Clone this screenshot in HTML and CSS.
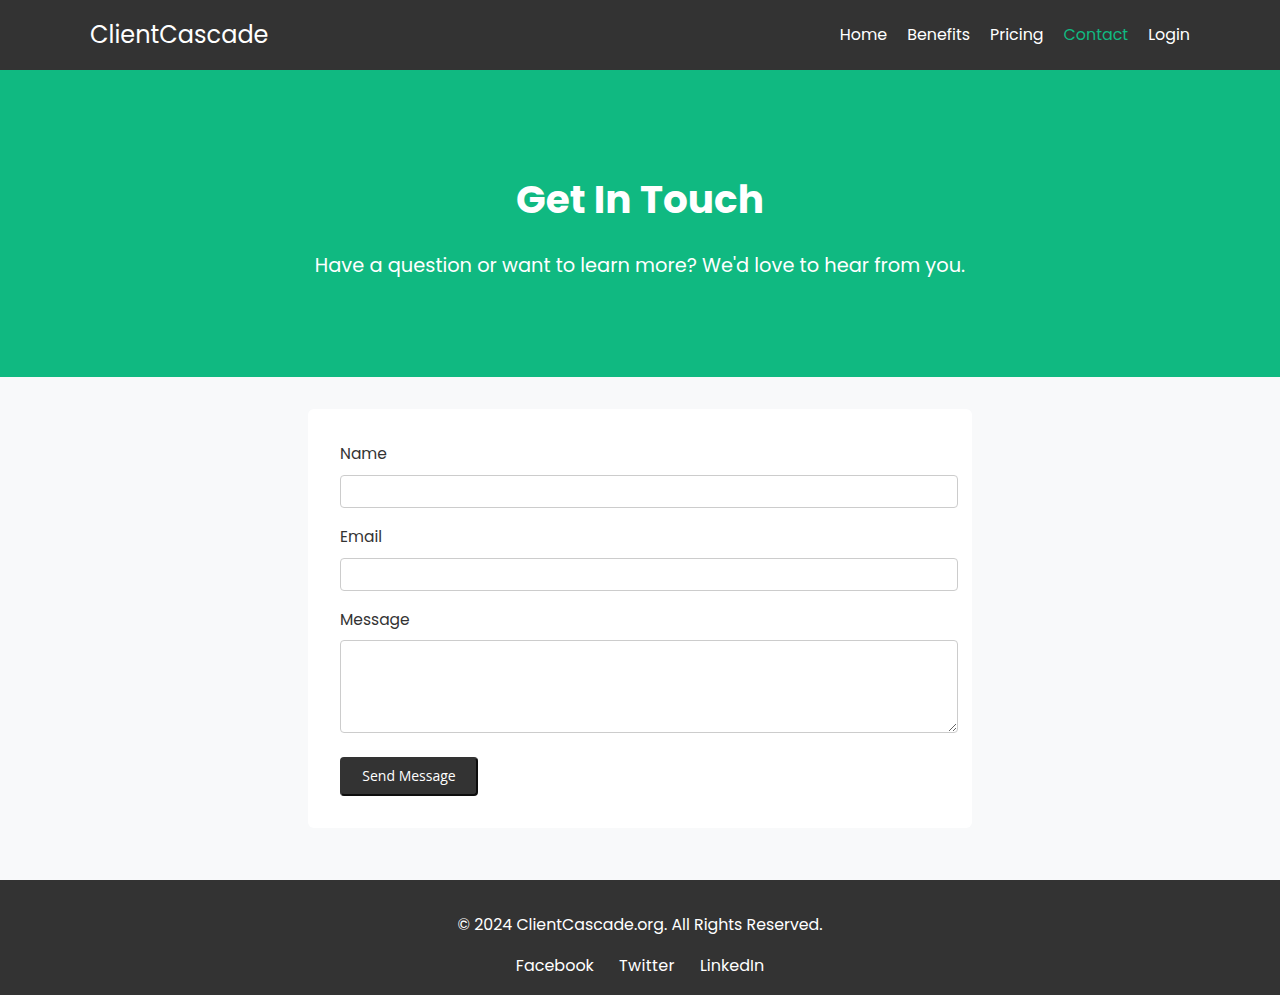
FILE: index.html
```html
<!DOCTYPE html>
<html lang="en">
<head>
<meta charset="utf-8">
<title>Contact - ClientCascade</title>
<link rel="stylesheet" href="styles.css">
</head>
<body>
<header class="site-header">
  <div class="container header-inner">
    <div class="logo">ClientCascade</div>
    <nav class="nav">
      <a href="#">Home</a>
      <a href="#">Benefits</a>
      <a href="#">Pricing</a>
      <a href="#" class="active">Contact</a>
      <a href="#">Login</a>
    </nav>
  </div>
</header>

<section class="hero">
  <h1 class="hero-title">Get In Touch</h1>
  <p class="hero-sub">Have a question or want to learn more? We'd love to hear from you.</p>
</section>

<main class="main">
  <form class="card">
    <div class="field">
      <label class="label" for="name">Name</label>
      <input class="input" id="name" type="text">
    </div>
    <div class="field">
      <label class="label" for="email">Email</label>
      <input class="input" id="email" type="email">
    </div>
    <div class="field field-last">
      <label class="label" for="msg">Message</label>
      <textarea class="input textarea" id="msg"></textarea>
    </div>
    <button class="btn" type="button">Send Message</button>
  </form>
</main>

<footer class="site-footer">
  <p class="copy">© 2024 ClientCascade.org. All Rights Reserved.</p>
  <div class="footer-links">
    <a href="#">Facebook</a>
    <a href="#">Twitter</a>
    <a href="#">LinkedIn</a>
  </div>
</footer>
</body>
</html>
```

FILE: styles.css
```css
* { box-sizing: border-box; }

body {
  margin: 0;
  font-family: "Poppins", "Open Sans", "Noto Sans", sans-serif;
  color: #333;
  background: #f8f9fa;
}

a { text-decoration: none; color: inherit; }

.container {
  width: 1100px;
  margin: 0 auto;
}

.site-header {
  background: #333333;
  color: #fff;
  height: 70px;
}

.header-inner {
  height: 70px;
  display: flex;
  align-items: center;
  justify-content: space-between;
}

.logo {
  font-size: 24px;
  font-weight: 400;
  line-height: 36px;
}

.nav {
  display: flex;
  gap: 20px;
  font-size: 15.9px;
  margin-top: -1px;
}

.nav a { color: #fff; }
.nav a.active { color: #10b981; }

.hero {
  background: #10b981;
  color: #fff;
  text-align: center;
  padding-top: 106px;
  height: 307px;
}

.hero-title {
  margin: 0;
  font-size: 39px;
  line-height: 48px;
  font-weight: 700;
}

.hero-sub {
  margin: 27px 0 0;
  font-size: 19.4px;
  line-height: 30px;
}

.main {
  padding: 32px 0 52px;
}

.card {
  width: 664px;
  margin: 0 auto;
  background: #fff;
  border-radius: 6px;
  padding: 32px 14px 32px 32px;
}

.field {
  margin-bottom: 16px;
}

.field-last {
  margin-bottom: 24px;
}

.label {
  display: block;
  font-size: 15.5px;
  line-height: 24px;
  padding-top: 1px;
  margin-bottom: 9px;
  color: #333;
}

.field-last .label {
  margin-bottom: 8px;
}

.input {
  display: block;
  width: 618px;
  height: 33px;
  padding: 8px;
  border: 1px solid #cccccc;
  border-radius: 4px;
  background: #fff;
  font-family: "Open Sans", sans-serif;
  font-size: 13px;
}

.textarea {
  height: 93px;
  resize: vertical;
}

.btn {
  display: block;
  width: 138px;
  height: 39px;
  padding: 0 0 2px;
  background: #333;
  color: #fff;
  border: 2px solid;
  border-color: #333 #0d0d0d #0d0d0d #333;
  border-radius: 4px;
  font-family: "Open Sans", "Noto Sans", sans-serif;
  font-size: 14px;
}

.site-footer {
  background: #333333;
  color: #fff;
  text-align: center;
  padding: 33px 0 30px;
}

.copy {
  margin: 0;
  font-size: 15.8px;
  line-height: 24px;
}

.footer-links {
  margin-top: 17px;
  display: flex;
  justify-content: center;
  gap: 25px;
  font-size: 16px;
  line-height: 24px;
}

.footer-links a:nth-child(2) {
  letter-spacing: 0.4px;
}
```
